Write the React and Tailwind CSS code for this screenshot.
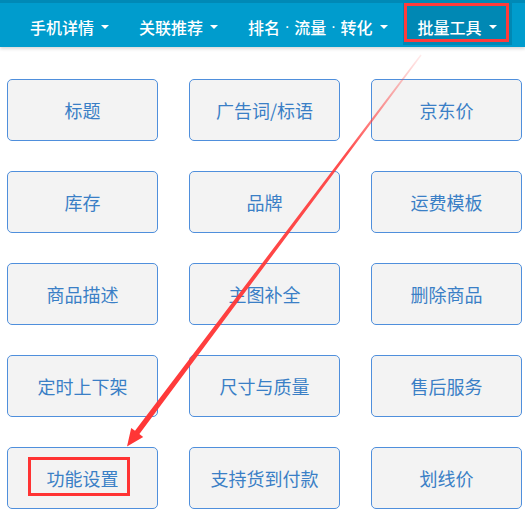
import { useState } from "react";

const Dot = () => (
  <span style={{ fontFamily: '"Liberation Sans", sans-serif' }}>{" · "}</span>
);

const navItems = [
  { key: "phone", label: "手机详情" },
  { key: "rel", label: "关联推荐" },
  {
    key: "rank",
    label: (
      <>
        排名<Dot />流量<Dot />转化
      </>
    ),
  },
  { key: "batch", label: "批量工具" },
];

const buttons = [
  "标题", "广告词/标语", "京东价",
  "库存", "品牌", "运费模板",
  "商品描述", "主图补全", "删除商品",
  "定时上下架", "尺寸与质量", "售后服务",
  "功能设置", "支持货到付款", "划线价",
];

const Caret = () => (
  <span className="ml-[7px] inline-block w-0 h-0 border-l-[4px] border-r-[4px] border-t-[4px] border-l-transparent border-r-transparent border-t-white" />
);

const App = () => {
  const [active, setActive] = useState(3);

  return (
    <div
      className="relative w-[525px] h-[510px] bg-white overflow-hidden"
      style={{ fontFamily: '"Noto Sans CJK SC", "Noto Sans", sans-serif' }}
    >
      <nav className="h-[47px] bg-[#009ccd] border-t-[3px] border-[#0089b6] shadow-[0_2px_3px_rgba(0,0,0,0.15)] flex pl-[15px]">
        {navItems.map((item, i) => (
          <button
            key={item.key}
            type="button"
            onClick={() => setActive(i)}
            className={
              "relative h-[42px] pt-[6px] px-[15px] flex items-center text-white text-[16px] font-medium whitespace-pre" +
              (active === i ? " bg-[#0088b4]" : "")
            }
          >
            {item.label}
            <Caret />
            {i === 3 && (
              <span className="absolute left-[1px] right-[3px] top-0 bottom-[3px] border-[3px] border-[#ff3b3b] pointer-events-none" />
            )}
          </button>
        ))}
      </nav>

      <div className="grid grid-cols-[151px_151px_151px] gap-x-[31px] gap-y-[30px] pl-[7px] pt-[32px]">
        {buttons.map((label, i) => (
          <div
            key={label}
            className="relative h-[62px] rounded-[5px] border border-[#4f8fdc] bg-[#f3f3f3] flex items-center justify-center text-[18px] text-[#3a7fc6]"
          >
            {label}
            {i === 12 && (
              <span className="absolute left-[20px] top-[9px] w-[102px] h-[39px] border-[3px] border-[#ff3333]" />
            )}
          </div>
        ))}
      </div>

      <svg className="absolute left-0 top-0 pointer-events-none" width="525" height="510">
        <defs>
          <linearGradient id="arrowFade" x1="421" y1="55" x2="127" y2="446" gradientUnits="userSpaceOnUse">
            <stop offset="0" stopColor="#ff3b3b" stopOpacity="0.1" />
            <stop offset="0.25" stopColor="#ff3b3b" stopOpacity="0.9" />
            <stop offset="1" stopColor="#ff3535" stopOpacity="1" />
          </linearGradient>
        </defs>
        <polygon
          points="420.4,54.6 421.6,55.4 139.4,434.0 143.2,437.0 127,446.5 131.2,428.0 135.0,430.8"
          fill="url(#arrowFade)"
        />
      </svg>
    </div>
  );
};

export default App;
